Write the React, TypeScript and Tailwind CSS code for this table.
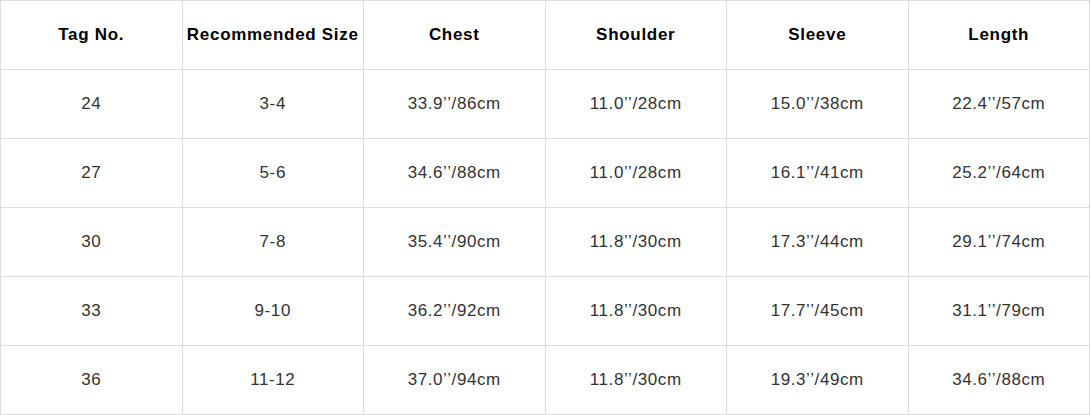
const HEADERS = ["Tag No.", "Recommended Size", "Chest", "Shoulder", "Sleeve", "Length"];

const ROWS = [
  ["24", "3-4", "33.9’’/86cm", "11.0’’/28cm", "15.0’’/38cm", "22.4’’/57cm"],
  ["27", "5-6", "34.6’’/88cm", "11.0’’/28cm", "16.1’’/41cm", "25.2’’/64cm"],
  ["30", "7-8", "35.4’’/90cm", "11.8’’/30cm", "17.3’’/44cm", "29.1’’/74cm"],
  ["33", "9-10", "36.2’’/92cm", "11.8’’/30cm", "17.7’’/45cm", "31.1’’/79cm"],
  ["36", "11-12", "37.0’’/94cm", "11.8’’/30cm", "19.3’’/49cm", "34.6’’/88cm"],
];

export default function App() {
  return (
    <div className="bg-white w-[1091px] h-[415px] font-['Liberation_Sans',Arial,sans-serif]">
      <table className="w-[1090px] table-fixed border-collapse">
        <thead>
          <tr className="h-[69px]">
            {HEADERS.map((h) => (
              <th
                key={h}
                className="border border-[#dcdcdc] p-0 text-center align-middle text-[17px] font-bold tracking-[0.7px] text-black"
              >
                {h}
              </th>
            ))}
          </tr>
        </thead>
        <tbody>
          {ROWS.map((row) => (
            <tr key={row[0]} className="h-[69px]">
              {row.map((cell, i) => (
                <td
                  key={i}
                  className="border border-[#dcdcdc] p-0 text-center align-middle text-[17px] tracking-[0.6px] text-[#333]"
                >
                  {cell}
                </td>
              ))}
            </tr>
          ))}
        </tbody>
      </table>
    </div>
  );
}
